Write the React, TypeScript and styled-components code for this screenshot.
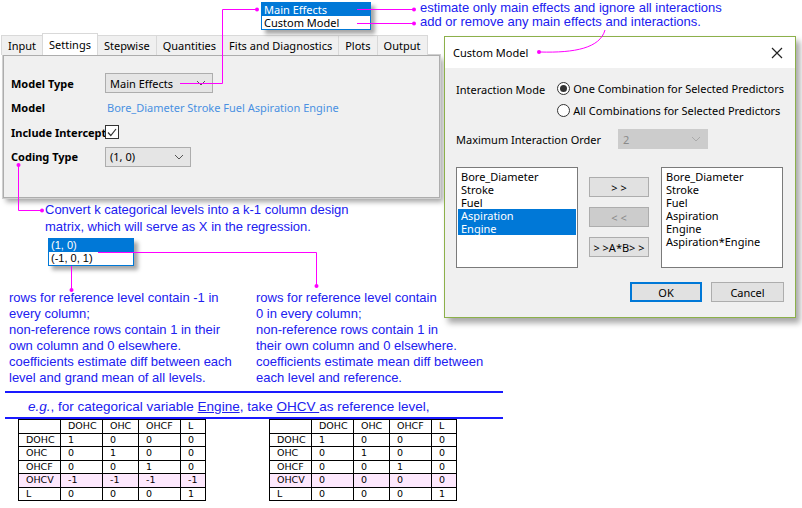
import React from "react";
import styled, { createGlobalStyle } from "styled-components";

const Global = createGlobalStyle`
  html, body { margin: 0; padding: 0; background: #fff; }
  body { font-family: "Noto Sans", "Open Sans", sans-serif; }
`;

const Canvas = styled.div`
  position: relative;
  width: 802px;
  height: 508px;
  overflow: hidden;
  background: #fff;
  font-size: 11px;
  color: #000;
  white-space: nowrap;
`;

const Place = styled.div<{ $x: number; $y: number; $w?: number; $z?: number }>`
  position: absolute;
  left: ${(p) => p.$x}px;
  top: ${(p) => p.$y}px;
  ${(p) => (p.$w ? `width: ${p.$w}px;` : "")}
  z-index: ${(p) => p.$z ?? 1};
`;

const Lines = styled.svg`
  position: absolute;
  left: 0;
  top: 0;
  z-index: 5;
  pointer-events: none;
`;

const Popup = styled.div<{ $w: number }>`
  width: ${(p) => p.$w}px;
  border: 1px solid #0078d7;
  background: #fff;
  box-shadow: 4px 4px 4px rgba(0, 0, 0, 0.35);
  display: flex;
  flex-direction: column;
`;

const PopItem = styled.div<{ $sel?: boolean; $font?: string }>`
  height: 13px;
  line-height: 13px;
  padding-left: 2px;
  font-family: ${(p) => p.$font ?? `"Noto Sans", sans-serif`};
  font-size: 11px;
  background: ${(p) => (p.$sel ? "#0078d7" : "#fff")};
  color: ${(p) => (p.$sel ? "#fff" : "#000")};
`;

const Note = styled.div<{ $lh?: number }>`
  font-family: "Liberation Sans", Arial, sans-serif;
  font-size: 13px;
  line-height: ${(p) => p.$lh ?? 16}px;
  color: #2020f0;
  white-space: nowrap;
`;

const Window = styled.div`
  width: 440px;
  display: flex;
  flex-direction: column;
`;

const Tabs = styled.div`
  display: flex;
  height: 20px;
  padding-left: 2px;
  align-items: flex-end;
`;

const Tab = styled.div<{ $active?: boolean }>`
  height: ${(p) => (p.$active ? 21 : 19)}px;
  padding: 0 6px;
  display: flex;
  align-items: center;
  border: 1px solid #d9d9d9;
  border-bottom: none;
  margin-left: -1px;
  background: ${(p) => (p.$active ? "#fff" : "#f0f0f0")};
  font-size: 11px;
  position: relative;
  z-index: ${(p) => (p.$active ? 2 : 1)};
`;

const Panel = styled.div`
  height: 126px;
  margin-left: 3px;
  border: 1px solid #adadad;
  outline: 1px solid #d0d0d0;
  background: #f0f0f0;
  box-shadow: 3px 4px 5px rgba(0, 0, 0, 0.35);
  display: grid;
  grid-template-columns: 94px 1fr;
  grid-auto-rows: 24.5px;
  align-items: center;
  padding: 15px 0 0 7px;
`;

const Label = styled.div`
  font-weight: bold;
  font-size: 11px;
`;

const Combo = styled.div<{ $w: number; $disabled?: boolean }>`
  width: ${(p) => p.$w}px;
  height: 20px;
  box-sizing: border-box;
  border: 1px solid ${(p) => (p.$disabled ? "#cccccc" : "#adadad")};
  background: ${(p) => (p.$disabled ? "#cccccc" : "#e5e5e5")};
  color: ${(p) => (p.$disabled ? "#8a8a8a" : "#000")};
  display: flex;
  align-items: center;
  justify-content: space-between;
  padding: 0 6px 0 4px;
  font-size: 11px;
`;

const Chevron = ({ c = "#555" }: { c?: string }) => (
  <svg width="10" height="6" viewBox="0 0 10 6">
    <path d="M1 1 L5 5 L9 1" fill="none" stroke={c} strokeWidth="1" />
  </svg>
);

const ModelText = styled.div`
  color: #4a90e2;
  font-size: 11px;
  padding-left: 2px;
`;

const Check = styled.div`
  width: 12px;
  height: 12px;
  border: 1px solid #333;
  background: #fff;
  display: flex;
  align-items: center;
  justify-content: center;
`;

const Dialog = styled.div`
  width: 350px;
  height: 280px;
  border: 1px solid #8cb04a;
  background: #f0f0f0;
  box-shadow: 4px 5px 6px rgba(0, 0, 0, 0.35);
  display: flex;
  flex-direction: column;
`;

const TitleBar = styled.div`
  height: 31px;
  background: #fff;
  display: flex;
  align-items: center;
  justify-content: space-between;
  padding: 0 12px 0 8px;
  font-size: 11px;
`;

const DBody = styled.div`
  padding: 13px 11px 0 11px;
  display: flex;
  flex-direction: column;
`;

const ModeRow = styled.div`
  display: flex;
`;

const ModeLabel = styled.div`
  width: 103px;
  padding-top: 1px;
`;

const Radios = styled.div`
  display: flex;
  flex-direction: column;
  gap: 7px;
`;

const RadioRow = styled.div`
  display: flex;
  align-items: center;
  gap: 3px;
`;

const Radio = styled.div<{ $on?: boolean }>`
  width: 11px;
  height: 11px;
  border: 1px solid #333;
  border-radius: 50%;
  background: #fff;
  display: flex;
  align-items: center;
  justify-content: center;
  &::after {
    content: "";
    width: 7px;
    height: 7px;
    border-radius: 50%;
    background: ${(p) => (p.$on ? "#333" : "transparent")};
  }
`;

const OrderRow = styled.div`
  display: flex;
  align-items: center;
  margin-top: 11px;
`;

const OrderLabel = styled.div`
  width: 162px;
`;

const ListsRow = styled.div`
  display: flex;
  margin-top: 18px;
  gap: 11px;
`;

const ListBox = styled.div`
  width: 122px;
  height: 101px;
  box-sizing: border-box;
  border: 1px solid #7a7a7a;
  background: #fff;
  padding: 2px 1px;
  display: flex;
  flex-direction: column;
`;

const ListItem = styled.div<{ $sel?: boolean }>`
  height: 13px;
  line-height: 13px;
  padding-left: 3px;
  font-size: 11px;
  background: ${(p) => (p.$sel ? "#0078d7" : "transparent")};
  color: ${(p) => (p.$sel ? "#fff" : "#000")};
`;

const BtnCol = styled.div`
  display: flex;
  flex-direction: column;
  padding-top: 10px;
  gap: 10px;
  width: 61px;
`;

const Btn = styled.div<{ $w?: number; $disabled?: boolean; $primary?: boolean }>`
  width: ${(p) => p.$w ?? 60}px;
  height: 20px;
  box-sizing: border-box;
  border: ${(p) => (p.$primary ? "2px solid #0078d7" : "1px solid #adadad")};
  background: ${(p) => (p.$disabled ? "#cccccc" : "#e1e1e1")};
  color: ${(p) => (p.$disabled ? "#8a8a8a" : "#000")};
  display: flex;
  align-items: center;
  justify-content: center;
  font-size: 11px;
`;

const Footer = styled.div`
  display: flex;
  justify-content: flex-end;
  gap: 9px;
  margin-top: 14px;
`;

const Rule = styled.div`
  width: 498px;
  height: 2px;
  background: #1a1aff;
`;

const Eg = styled.div`
  font-family: "Liberation Sans", Arial, sans-serif;
  font-size: 13.5px;
  color: #2020f0;
  padding: 6px 0 3px 23px;
  & u { text-decoration: underline; }
`;

const Table = styled.table`
  border-collapse: collapse;
  font-family: "DejaVu Sans", Tahoma, sans-serif;
  font-size: 9.5px;
  width: 188px;
  td {
    border: 1px solid #000;
    height: 12.5px;
    padding: 0 0 0 7px;
    line-height: 12px;
  }
  tr.ref td { background: #fde8fd; }
`;

const Sections = styled.div`
  display: flex;
  flex-direction: column;
  align-items: flex-start;
`;

const Tables = styled.div`
  display: flex;
  gap: 63px;
  padding-left: 13px;
`;

const cols = ["", "DOHC", "OHC", "OHCF", "L"];
const widths = [42, 42, 36, 42, 25];
const rowsL = [
  ["DOHC", "1", "0", "0", "0"],
  ["OHC", "0", "1", "0", "0"],
  ["OHCF", "0", "0", "1", "0"],
  ["OHCV", "-1", "-1", "-1", "-1"],
  ["L", "0", "0", "0", "1"],
];
const rowsR = rowsL.map((r) => (r[0] === "OHCV" ? ["OHCV", "0", "0", "0", "0"] : r));

const CodeTable = ({ rows }: { rows: string[][] }) => (
  <Table>
    <colgroup>
      {widths.map((w, i) => (
        <col key={i} style={{ width: w }} />
      ))}
    </colgroup>
    <tbody>
      <tr>{cols.map((c, i) => <td key={i}>{c}</td>)}</tr>
      {rows.map((r) => (
        <tr key={r[0]} className={r[0] === "OHCV" ? "ref" : ""}>
          {r.map((c, i) => <td key={i}>{c}</td>)}
        </tr>
      ))}
    </tbody>
  </Table>
);

const M = "#ff00ff";

export default function App() {
  return (
    <>
      <Global />
      <Canvas>
        <Place $x={0} $y={35} $z={1}>
          <Window>
            <Tabs>
              <Tab>Input</Tab>
              <Tab $active>Settings</Tab>
              <Tab>Stepwise</Tab>
              <Tab>Quantities</Tab>
              <Tab>Fits and Diagnostics</Tab>
              <Tab>Plots</Tab>
              <Tab>Output</Tab>
            </Tabs>
            <Panel>
              <Label>Model Type</Label>
              <Combo $w={108}>Main Effects<Chevron /></Combo>
              <Label>Model</Label>
              <ModelText>Bore_Diameter Stroke Fuel Aspiration Engine</ModelText>
              <Label>Include Intercept</Label>
              <Check>
                <svg width="10" height="9" viewBox="0 0 10 9">
                  <path d="M1 4.5 L3.8 7.5 L9 1" fill="none" stroke="#333" strokeWidth="1.2" />
                </svg>
              </Check>
              <Label>Coding Type</Label>
              <Combo $w={86}>(1, 0)<Chevron /></Combo>
            </Panel>
          </Window>
        </Place>

        <Place $x={261} $y={2} $z={3}>
          <Popup $w={108}>
            <PopItem $sel>Main Effects</PopItem>
            <PopItem>Custom Model</PopItem>
          </Popup>
        </Place>

        <Place $x={420} $y={1} $z={3}>
          <Note $lh={14}>estimate only main effects and ignore all interactions</Note>
          <Note $lh={14}>add or remove any main effects and interactions.</Note>
        </Place>

        <Place $x={45} $y={201} $z={3}>
          <Note $lh={17}>Convert k categorical levels into a k-1 column design</Note>
          <Note $lh={17}>matrix, which will serve as X in the regression.</Note>
        </Place>

        <Place $x={48} $y={238} $z={3}>
          <Popup $w={84}>
            <PopItem $sel $font={`"Liberation Sans", Arial, sans-serif`}>(1, 0)</PopItem>
            <PopItem $font={`"Liberation Sans", Arial, sans-serif`}>(-1, 0, 1)</PopItem>
          </Popup>
        </Place>

        <Place $x={9} $y={290} $z={3}>
          <Note>
            rows for reference level contain -1 in<br />
            every column;<br />
            non-reference rows contain 1 in their<br />
            own column and 0 elsewhere.<br />
            coefficients estimate diff between each<br />
            level and grand mean of all levels.
          </Note>
        </Place>
        <Place $x={256} $y={290} $z={3}>
          <Note>
            rows for reference level contain<br />
            0 in every column;<br />
            non-reference rows contain 1 in<br />
            their own column and 0 elsewhere.<br />
            coefficients estimate mean diff between<br />
            each level and reference.
          </Note>
        </Place>

        <Place $x={5} $y={391} $z={3}>
          <Sections>
            <Rule />
            <Eg>
              <i>e.g.</i>, for categorical variable <u>Engine</u>, take <u>OHCV </u>as reference level,
            </Eg>
            <Rule />
            <Tables>
              <CodeTable rows={rowsL} />
              <CodeTable rows={rowsR} />
            </Tables>
          </Sections>
        </Place>

        <Place $x={444} $y={36} $z={4}>
          <Dialog>
            <TitleBar>
              <span>Custom Model</span>
              <svg width="12" height="12" viewBox="0 0 12 12">
                <path d="M1 1 L11 11 M11 1 L1 11" stroke="#222" strokeWidth="1.2" />
              </svg>
            </TitleBar>
            <DBody>
              <ModeRow>
                <ModeLabel>Interaction Mode</ModeLabel>
                <Radios>
                  <RadioRow><Radio $on />One Combination for Selected Predictors</RadioRow>
                  <RadioRow><Radio />All Combinations for Selected Predictors</RadioRow>
                </Radios>
              </ModeRow>
              <OrderRow>
                <OrderLabel>Maximum Interaction Order</OrderLabel>
                <Combo $w={90} $disabled>2<Chevron c="#aaa" /></Combo>
              </OrderRow>
              <ListsRow>
                <ListBox>
                  <ListItem>Bore_Diameter</ListItem>
                  <ListItem>Stroke</ListItem>
                  <ListItem>Fuel</ListItem>
                  <ListItem $sel>Aspiration</ListItem>
                  <ListItem $sel>Engine</ListItem>
                </ListBox>
                <BtnCol>
                  <Btn>&gt; &gt;</Btn>
                  <Btn $disabled>&lt; &lt;</Btn>
                  <Btn>&gt; &gt;A*B&gt; &gt;</Btn>
                </BtnCol>
                <ListBox>
                  <ListItem>Bore_Diameter</ListItem>
                  <ListItem>Stroke</ListItem>
                  <ListItem>Fuel</ListItem>
                  <ListItem>Aspiration</ListItem>
                  <ListItem>Engine</ListItem>
                  <ListItem>Aspiration*Engine</ListItem>
                </ListBox>
              </ListsRow>
              <Footer>
                <Btn $w={72} $primary>OK</Btn>
                <Btn $w={73}>Cancel</Btn>
              </Footer>
            </DBody>
          </Dialog>
        </Place>

        <Lines width="802" height="508" viewBox="0 0 802 508">
          <g stroke={M} strokeWidth="1" fill="none">
            <path d="M180 83.5 H222.5 V9.5 H256" />
            <path d="M357 9.5 H413" />
            <path d="M357 23.5 H413" />
            <path d="M18.5 165 V210.5 H42" />
            <path d="M98 252.5 H316.5 V285" />
            <path d="M71.5 266 V289" />
            <path d="M605 30 C600 48 575 53 540 52" />
          </g>
          <g fill={M}>
            <circle cx="257" cy="9.5" r="2" />
            <circle cx="414" cy="9.5" r="2" />
            <circle cx="414" cy="23.5" r="2" />
            <circle cx="18.5" cy="165" r="2" />
            <circle cx="42" cy="210.5" r="2" />
            <circle cx="316.5" cy="286" r="2" />
            <circle cx="71.5" cy="290" r="2" />
            <circle cx="539" cy="52" r="2" />
          </g>
        </Lines>
      </Canvas>
    </>
  );
}
